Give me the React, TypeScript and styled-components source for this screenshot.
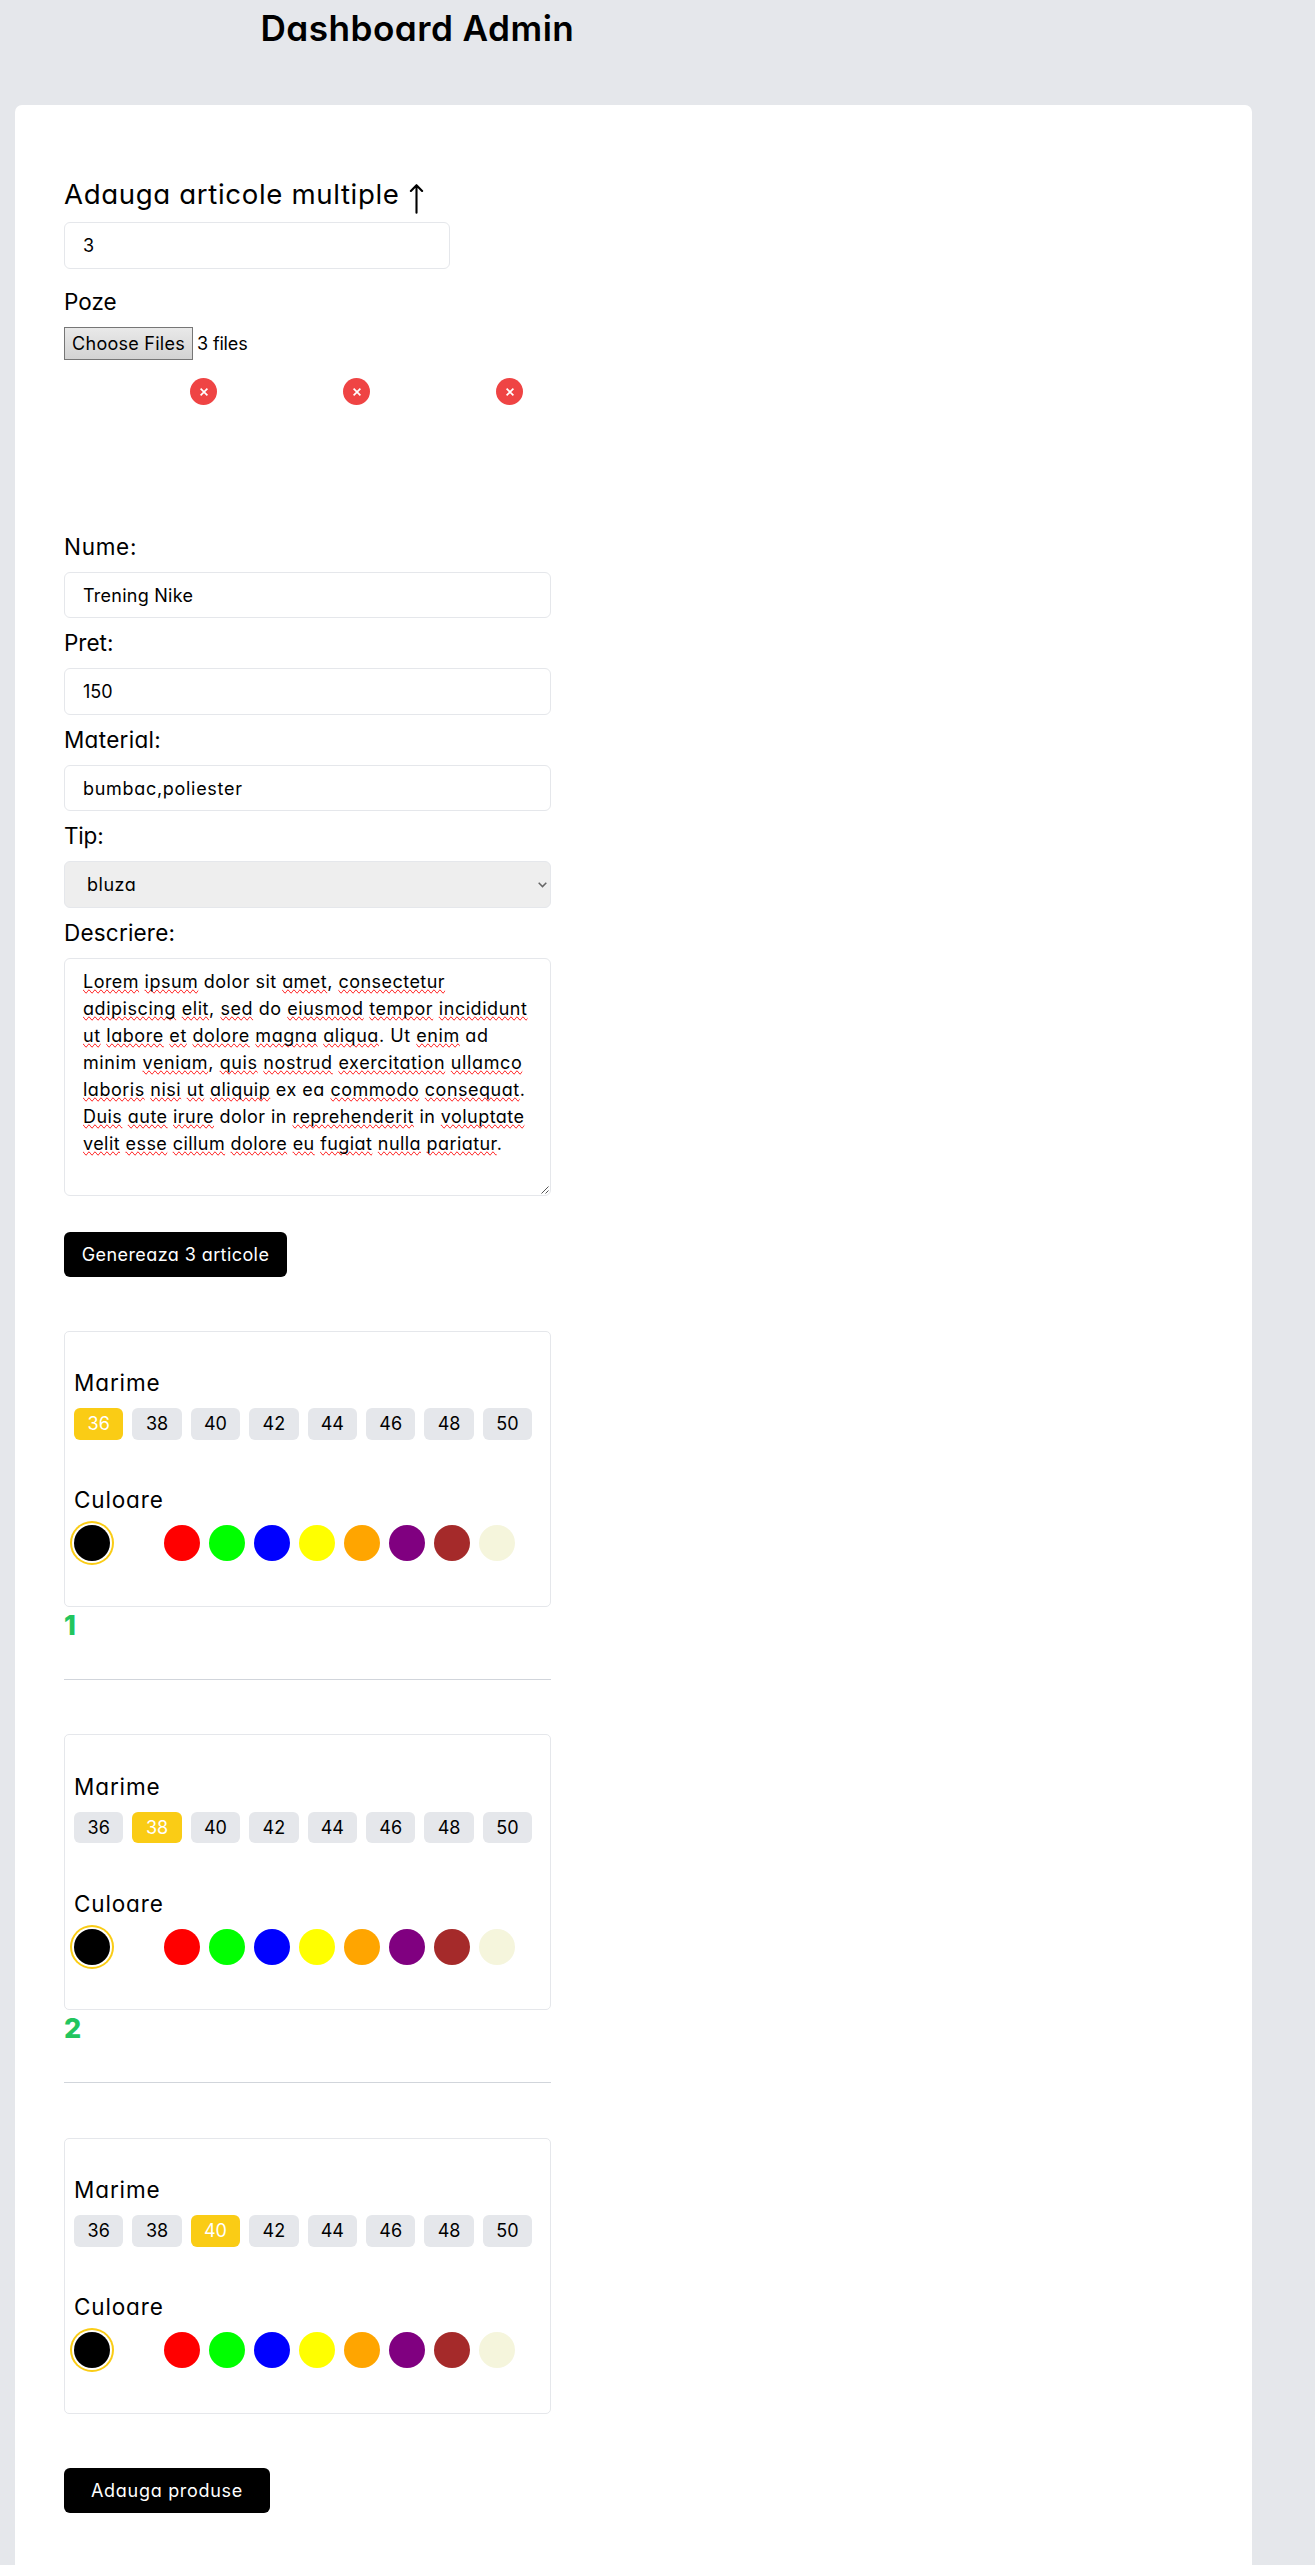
import React from "react";
import styled, { createGlobalStyle } from "styled-components";

const Global = createGlobalStyle`
  *, *::before, *::after { box-sizing: border-box; }
  body {
    margin: 0;
    background: #e5e7eb;
    color: #000;
    font-family: Inter, "Open Sans", sans-serif;
    font-feature-settings: "cv11";
    font-size: 18px;
  }
  input, select, button { font: inherit; font-feature-settings: inherit; color: inherit; }
`;

const Header = styled.header`
  height: 105px;
  padding-left: 260.5px;
`;

const Title = styled.h1`
  margin: 0;
  font-size: 35.2px;
  font-weight: 600;
  line-height: 57px;
  letter-spacing: 0.45px;
  white-space: nowrap;
`;

const Panel = styled.main`
  width: 1237px;
  min-height: 2460px;
  margin-left: 15px;
  padding: 71px 49px 0;
  border-radius: 7px 7px 0 0;
  background: #fff;
`;

const Form = styled.div`
  width: 487px;
`;

const Heading = styled.h2`
  display: flex;
  align-items: center;
  gap: 9px;
  height: 36px;
  margin: 0 0 10px;
  font-size: 27.6px;
  font-weight: 400;
  line-height: 36px;
  letter-spacing: 0.65px;
  white-space: nowrap;
`;

const UpArrow = styled.svg`
  margin: 5px 0 -5px;
`;

const Label = styled.label<{ $spacing?: string; $top?: string }>`
  display: block;
  margin-top: ${(p) => p.$top ?? "0"};
  font-size: 22.5px;
  line-height: 50px;
  letter-spacing: ${(p) => p.$spacing ?? "0"};
`;

const Input = styled.input<{ $width?: string; $spacing?: string }>`
  display: block;
  width: ${(p) => p.$width ?? "100%"};
  height: 46.5px;
  padding: 0 18px;
  border: 1px solid #e5e7eb;
  border-radius: 6px;
  outline: none;
  background: #fff;
  letter-spacing: ${(p) => p.$spacing ?? "0"};
`;

const FileRow = styled.div`
  display: flex;
  align-items: center;
  gap: 4px;
  height: 33px;
`;

const FileButton = styled.button`
  width: 129px;
  height: 33px;
  padding: 0;
  border: 1px solid #767676;
  background: linear-gradient(#e9e9e9, #d3d3d3);
  letter-spacing: 0.25px;
  white-space: nowrap;
`;

const FileCount = styled.span`
  letter-spacing: -0.15px;
`;

const Previews = styled.div`
  display: flex;
  gap: 9px;
  margin: 27px 0 17.75px;
`;

const Preview = styled.div`
  position: relative;
  flex: 0 0 144px;
  height: 117px;
`;

const Remove = styled.button`
  position: absolute;
  top: -9px;
  right: -9px;
  display: flex;
  align-items: center;
  justify-content: center;
  width: 27px;
  height: 27px;
  padding: 0;
  border: 0;
  border-radius: 50%;
  background: #ef4444;
  color: #fff;
`;

const SelectBox = styled.div`
  position: relative;
`;

const Select = styled.select`
  appearance: none;
  display: block;
  width: 100%;
  height: 46.5px;
  padding: 0 22px;
  border: 1px solid #e5e7eb;
  border-radius: 6px;
  background: #eee;
  letter-spacing: 0.5px;
`;

const Chevron = styled.svg`
  position: absolute;
  right: 4px;
  top: 21px;
`;

const TextArea = styled.div`
  position: relative;
  height: 238.25px;
  padding: 9.6px 0 0 18px;
  border: 1px solid #e5e7eb;
  border-radius: 6px;
`;

const Line = styled.div<{ $spacing: string }>`
  line-height: 27px;
  white-space: pre;
  letter-spacing: ${(p) => p.$spacing};
`;

const Misspelled = styled.span`
  text-decoration-line: spelling-error;
`;

const Grip = styled.svg`
  position: absolute;
  right: 1px;
  bottom: 1px;
`;

const Action = styled.button<{ $width: string; $top: string; $spacing: string }>`
  display: block;
  width: ${(p) => p.$width};
  height: 45px;
  margin: ${(p) => p.$top} 0 0;
  padding: 0;
  border: 0;
  border-radius: 6px;
  background: #000;
  color: #fff;
  letter-spacing: ${(p) => p.$spacing};
  white-space: nowrap;
`;

const Articles = styled.div`
  margin-top: 53.9px;
`;

const Article = styled.section`
  height: 275.8px;
  padding: 26.2px 9px 0;
  border: 1px solid #e5e7eb;
  border-radius: 5px;
`;

const Sizes = styled.div`
  display: flex;
  gap: 9px;
  margin-bottom: 35.4px;
`;

const Size = styled.div<{ $active: boolean }>`
  width: 49.4px;
  height: 31.6px;
  border-radius: 6px;
  background: ${(p) => (p.$active ? "#facc15" : "#e5e7eb")};
  color: ${(p) => (p.$active ? "#fff" : "#000")};
  line-height: 32px;
  text-align: center;
`;

const Colors = styled.div`
  display: flex;
  gap: 9px;
`;

const Swatch = styled.div<{ $color: string; $active: boolean }>`
  width: 36px;
  height: 36px;
  border-radius: 50%;
  background: ${(p) => p.$color};
  box-shadow: ${(p) => (p.$active ? "0 0 0 2px #fff, 0 0 0 4px #facc15" : "none")};
`;

const Index = styled.div`
  height: 36px;
  color: #22c55e;
  font-size: 27px;
  font-weight: 800;
  line-height: 37px;
`;

const Divider = styled.hr`
  height: 1px;
  margin: 36.2px 0 54.5px;
  border: 0;
  background: #d1d5db;
`;

const sizes = ["36", "38", "40", "42", "44", "46", "48", "50"];
const colors = ["black", "white", "red", "lime", "blue", "yellow", "orange", "purple", "brown", "beige"];

// Words between asterisks are flagged by the spell checker.
const lines = [
  { text: "*Lorem* *ipsum* dolor sit *amet*, *consectetur*", spacing: "0.47px" },
  { text: "*adipiscing* *elit*, *sed* do *eiusmod* *tempor* *incididunt*", spacing: "0.55px" },
  { text: "*ut* *labore* *et* *dolore* *magna* *aliqua*. Ut *enim* ad", spacing: "0.55px" },
  { text: "minim *veniam*, *quis* *nostrud* *exercitation* *ullamco*", spacing: "0.6px" },
  { text: "*laboris* *nisi* *ut* *aliquip* ex ea *commodo* *consequat*.", spacing: "0.51px" },
  { text: "*Duis* *aute* *irure* dolor in *reprehenderit* in *voluptate*", spacing: "0.45px" },
  { text: "*velit* *esse* *cillum* *dolore* *eu* *fugiat* *nulla* *pariatur*.", spacing: "0.43px" },
];

export default function App() {
  return (
    <>
      <Global />
      <Header><Title>Dashboard Admin</Title></Header>
      <Panel>
        <Form>
          <Heading>
            Adauga articole multiple
            <UpArrow width="15" height="30" viewBox="0 0 15 30" fill="none" stroke="#000" strokeWidth="2.1" strokeLinecap="round" strokeLinejoin="round">
              <path d="M7.5 28.8V1.2M1.9 7l5.6-5.8L13.1 7" />
            </UpArrow>
          </Heading>
          <Input $width="386px" defaultValue="3" />
          <Label $top="8.5px">Poze</Label>
          <FileRow><FileButton>Choose Files</FileButton><FileCount>3 files</FileCount></FileRow>
          <Previews>
            {[0, 1, 2].map((i) => (
              <Preview key={i}>
                <Remove>
                  <svg width="8" height="8" viewBox="0 0 8 8" stroke="#fff" strokeWidth="1.7"><path d="M.6.6l6.8 6.8M7.4.6L.6 7.4" /></svg>
                </Remove>
              </Preview>
            ))}
          </Previews>
          <Label $spacing="0.7px">Nume:</Label>
          <Input $spacing="0.25px" defaultValue="Trening Nike" />
          <Label>Pret:</Label>
          <Input defaultValue="150" />
          <Label $spacing="0.3px">Material:</Label>
          <Input $spacing="0.7px" defaultValue="bumbac,poliester" />
          <Label $spacing="-0.2px">Tip:</Label>
          <SelectBox>
            <Select><option>bluza</option></Select>
            <Chevron width="9" height="6" viewBox="0 0 9 6" fill="none" stroke="#666" strokeWidth="1.5"><path d="M.7.8l3.8 3.8L8.3.8" /></Chevron>
          </SelectBox>
          <Label $spacing="0.2px">Descriere:</Label>
          <TextArea>
            {lines.map((l) => (
              <Line key={l.text} $spacing={l.spacing}>
                {l.text.split("*").map((part, i) => (i % 2 ? <Misspelled key={i}>{part}</Misspelled> : part))}
              </Line>
            ))}
            <Grip width="8" height="8" viewBox="0 0 8 8" stroke="#555" strokeWidth="1"><path d="M.5 7.5l7-7M4.5 7.5l3-3" /></Grip>
          </TextArea>
          <Action $width="223px" $top="36px" $spacing="0.42px">Genereaza 3 articole</Action>
          <Articles>
            {[0, 1, 2].map((n) => (
              <React.Fragment key={n}>
                <Article>
                  <Label $spacing="0.9px">Marime</Label>
                  <Sizes>{sizes.map((s, i) => <Size key={s} $active={i === n}>{s}</Size>)}</Sizes>
                  <Label $spacing="0.85px">Culoare</Label>
                  <Colors>{colors.map((c, i) => <Swatch key={c} $color={c} $active={i === 0} />)}</Colors>
                </Article>
                {n < 2 && <><Index>{n + 1}</Index><Divider /></>}
              </React.Fragment>
            ))}
          </Articles>
          <Action $width="206px" $top="54.3px" $spacing="0.7px">Adauga produse</Action>
        </Form>
      </Panel>
    </>
  );
}
